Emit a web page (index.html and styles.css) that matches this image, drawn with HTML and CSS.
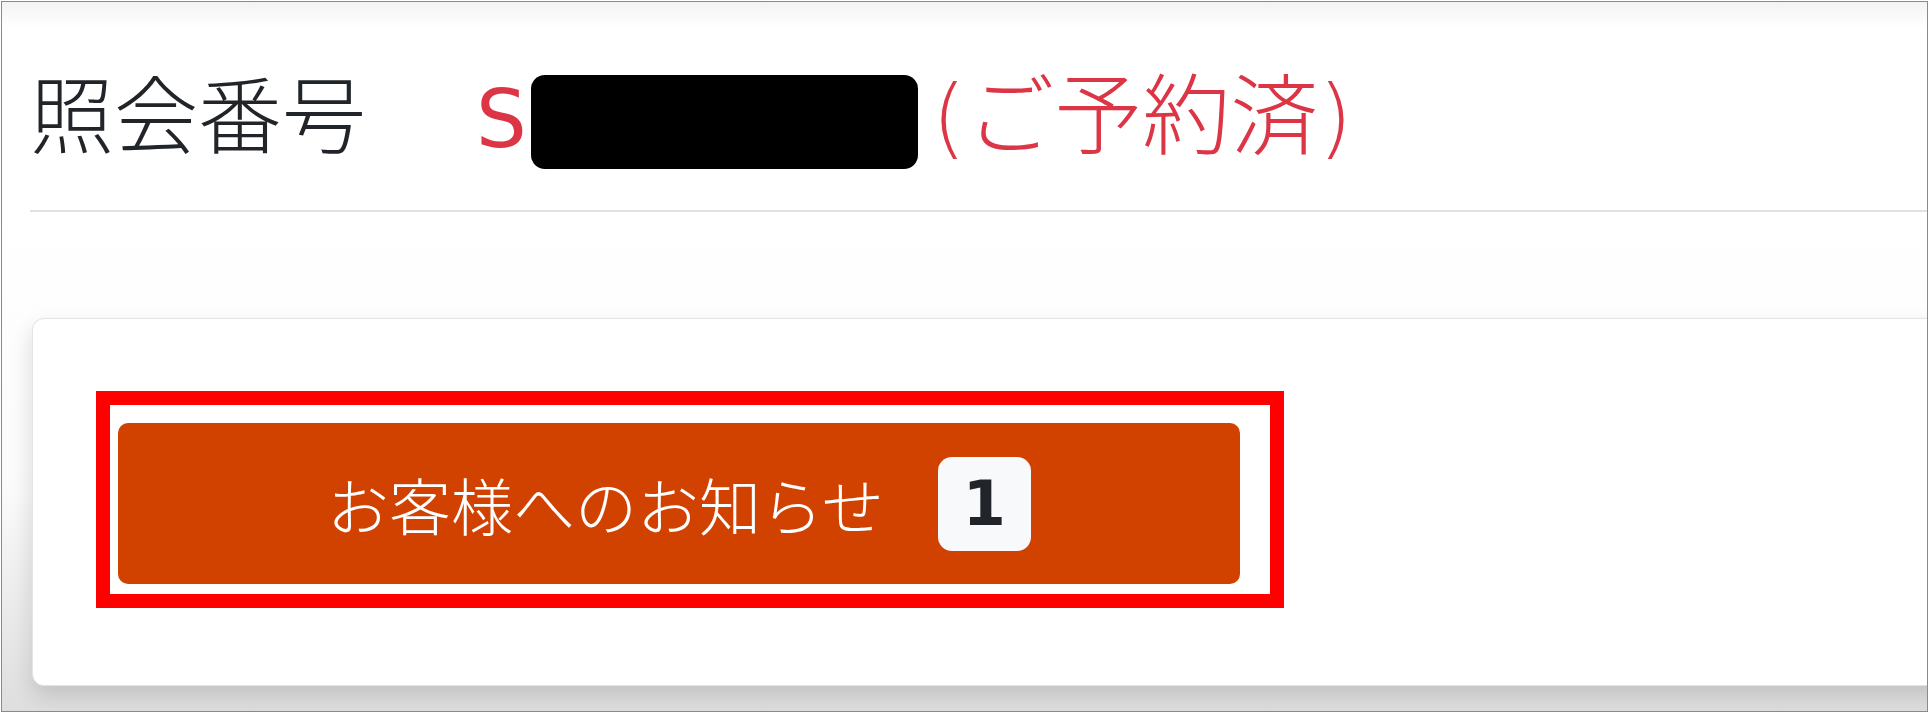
FILE: index.html
```html
<!DOCTYPE html>
<html lang="ja">
<head>
    <meta charset="UTF-8">
    <meta name="viewport" content="width=device-width, initial-scale=1.0">
    <title>照会番号</title>
    <link rel="stylesheet" href="styles.css">
</head>
<body>
    <div class="frame">
        <header class="reservation-header">
            <h1 class="reservation-title">
                <span class="label">照会番号</span>
                <span class="number"><span class="prefix">S</span><span class="mask"></span><span class="status">(ご予約済)</span></span>
            </h1>
        </header>
        <main class="content">
            <section class="card">
                <div class="highlight">
                    <button class="notice-button">
                        <span>お客様へのお知らせ</span>
                        <span class="badge">1</span>
                    </button>
                </div>
            </section>
        </main>
    </div>
</body>
</html>
```

FILE: styles.css
```css
html, body {
    margin: 0;
    padding: 0;
    height: 713px;
    overflow: hidden;
    background-color: #ffffff;
}

body {
    font-family: "Noto Sans CJK JP", "Noto Sans", sans-serif;
    color: #212529;
}

.frame {
    margin: 1px;
    height: 709px;
    border: 1px solid #8a8a8a;
    overflow: hidden;
    display: flex;
    flex-direction: column;
}

.reservation-header {
    padding: 58px 0 0 28px;
    background: linear-gradient(to bottom, #f3f3f3 0, #ffffff 26px);
}

.reservation-title {
    margin: 0;
    padding-bottom: 40px;
    display: flex;
    align-items: baseline;
    gap: 110px;
    font-size: 84px;
    font-weight: 300;
    line-height: 101px;
    border-bottom: 2px solid #dfe3e8;
}

.number {
    color: #dc3545;
    font-family: "DejaVu Sans", "Noto Sans CJK JP", sans-serif;
    font-size: 80px;
}

.prefix {
    font-weight: 400;
}

.status {
    font-size: 88px;
}

.mask {
    display: inline-block;
    width: 387px;
    height: 94px;
    margin: 0 14px 0 4px;
    background-color: #000000;
    border-radius: 14px;
    vertical-align: -22px;
}

.content {
    flex: 1;
    padding: 106px 0 0 30px;
    background: linear-gradient(to bottom, #ffffff 0, #fbfbfb 55%, #dedede 100%);
}

.card {
    margin-right: -60px;
    padding: 72px 0 77px 63px;
    background-color: #ffffff;
    border: 1px solid #e4e4e4;
    border-radius: 12px;
    box-shadow: 0 10px 22px rgba(0, 0, 0, 0.14);
}

.highlight {
    width: fit-content;
    padding: 18px 30px 10px 8px;
    border: 14px solid #ff0000;
}

.notice-button {
    width: 1122px;
    height: 161px;
    display: flex;
    align-items: center;
    justify-content: center;
    gap: 54px;
    border: none;
    border-radius: 10px;
    background-color: #d14100;
    color: #ffffff;
    font-family: "Noto Sans CJK JP", "Noto Sans", sans-serif;
    font-size: 62px;
    font-weight: 300;
    padding: 0;
}

.badge {
    padding: 16px 25px;
    background-color: #f8f9fa;
    color: #212529;
    border-radius: 14px;
    font-family: "DejaVu Sans", sans-serif;
    font-weight: 700;
    font-size: 62px;
    line-height: 62px;
}
```
